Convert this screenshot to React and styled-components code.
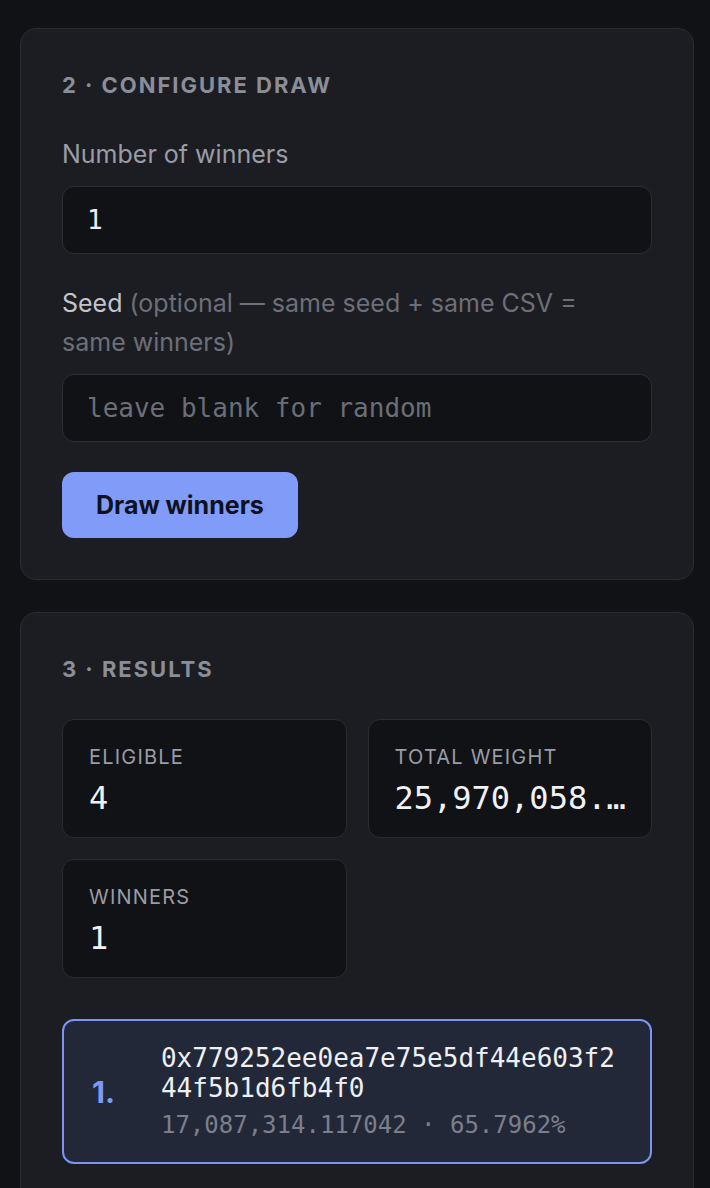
import React from 'react';
import styled, { createGlobalStyle } from 'styled-components';

const GlobalStyle = createGlobalStyle`
  html, body {
    margin: 0;
    padding: 0;
    background: #111216;
  }
  * {
    box-sizing: border-box;
  }
`;

const stats = [
  { label: 'Eligible', value: '4' },
  { label: 'Total weight', value: '25,970,058.117042' },
  { label: 'Winners', value: '1' },
];

const winners = [
  {
    address: '0x779252ee0ea7e75e5df44e603f244f5b1d6fb4f0',
    weight: '17,087,314.117042',
    share: '65.7962%',
  },
];

const App = () => {
  return (
    <Page>
      <GlobalStyle />
      <Card>
        <Heading>2 · Configure draw</Heading>
        <Field>
          <Label $strong>Number of winners</Label>
          <Input type="text" defaultValue="1" />
        </Field>
        <Field>
          <Label>
            <Strong>Seed</Strong> (optional — same seed + same CSV = same winners)
          </Label>
          <Input type="text" placeholder="leave blank for random" />
        </Field>
        <DrawButton>Draw winners</DrawButton>
      </Card>

      <Card>
        <Heading>3 · Results</Heading>
        <StatGrid>
          {stats.map((s) => (
            <Stat key={s.label}>
              <StatLabel>{s.label}</StatLabel>
              <StatValue>{s.value}</StatValue>
            </Stat>
          ))}
        </StatGrid>
        {winners.map((w, i) => (
          <Winner key={w.address}>
            <Rank>{i + 1}.</Rank>
            <WinnerInfo>
              <Address>{w.address}</Address>
              <Meta>
                {w.weight} · {w.share}
              </Meta>
            </WinnerInfo>
          </Winner>
        ))}
      </Card>
    </Page>
  );
};

const Page = styled.div`
  display: flex;
  flex-direction: column;
  gap: 32px;
  padding: 28px 16px 40px 20px;
  font-family: Inter, 'Noto Sans', sans-serif;
`;

const Card = styled.section`
  display: flex;
  flex-direction: column;
  align-items: flex-start;
  padding: 41px;
  background: #1c1d22;
  border: 1px solid #2b2d33;
  border-radius: 16px;
`;

const Heading = styled.h2`
  margin: 0 0 35px;
  font-size: 22px;
  line-height: 30px;
  font-weight: 700;
  letter-spacing: 0.09em;
  text-transform: uppercase;
  color: #8b8e99;
`;

const Field = styled.div`
  display: flex;
  flex-direction: column;
  gap: 12px;
  width: 100%;
  margin-bottom: 30px;
`;

const Label = styled.label`
  max-width: 545px;
  font-size: 25px;
  line-height: 39px;
  color: ${(props) => (props.$strong ? '#9a9ca6' : '#6c6f79')};
`;

const Strong = styled.span`
  color: #c3c5cc;
`;

const Input = styled.input`
  width: 100%;
  height: 68px;
  padding: 0 24px;
  background: #111216;
  border: 1px solid #2c2e35;
  border-radius: 12px;
  outline: none;
  font-family: 'DejaVu Sans Mono', 'Liberation Mono', monospace;
  font-size: 26px;
  color: #eceef1;

  &::placeholder {
    color: #6b6e76;
  }
`;

const DrawButton = styled.button`
  height: 66px;
  padding: 0 34px;
  background: #809bf8;
  border: none;
  border-radius: 12px;
  font-family: Inter, 'Noto Sans', sans-serif;
  font-size: 25px;
  font-weight: 700;
  color: #0e1220;
  cursor: pointer;
`;

const StatGrid = styled.div`
  display: grid;
  grid-template-columns: 1fr 1fr;
  gap: 21px;
  width: 100%;
  margin-bottom: 41px;
`;

const Stat = styled.div`
  display: flex;
  flex-direction: column;
  gap: 9px;
  min-width: 0;
  height: 119px;
  padding: 25px 22px 19px 26px;
  background: #111216;
  border: 1px solid #2a2c32;
  border-radius: 12px;
`;

const StatLabel = styled.div`
  font-size: 20px;
  line-height: 24px;
  letter-spacing: 0.06em;
  text-transform: uppercase;
  color: #9a9ca6;
`;

const StatValue = styled.div`
  overflow: hidden;
  white-space: nowrap;
  text-overflow: ellipsis;
  font-family: 'DejaVu Sans Mono', 'Liberation Mono', monospace;
  font-size: 32px;
  line-height: 40px;
  color: #f0f1f3;
`;

const Winner = styled.div`
  display: flex;
  align-items: center;
  gap: 46px;
  width: 100%;
  padding: 22px 30px 22px 28px;
  background: #232838;
  border: 2px solid #7b95f2;
  border-radius: 12px;
`;

const Rank = styled.div`
  flex-shrink: 0;
  font-size: 30px;
  font-weight: 700;
  color: #7f9af6;
`;

const WinnerInfo = styled.div`
  display: flex;
  flex-direction: column;
  gap: 7px;
  min-width: 0;
  font-family: 'DejaVu Sans Mono', 'Liberation Mono', monospace;
`;

const Address = styled.div`
  font-size: 26px;
  line-height: 30px;
  word-break: break-all;
  color: #eef0f4;
`;

const Meta = styled.div`
  font-size: 24px;
  line-height: 30px;
  color: #7b7f8b;
`;

export default App;
